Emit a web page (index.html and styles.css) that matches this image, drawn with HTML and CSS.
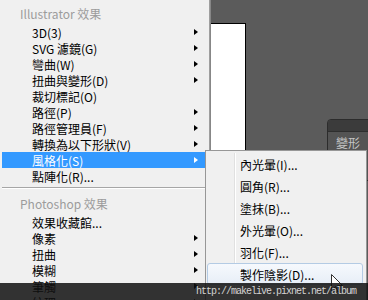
FILE: index.html
```html
<!DOCTYPE html>
<html>
<head>
<meta charset="utf-8">
<link rel="stylesheet" href="styles.css">
</head>
<body>
<div class="screen">
  <div class="menu">
    <div class="head">Illustrator 效果</div>
    <div class="row"><span>3D(3)</span><i class="arr"></i></div>
    <div class="row"><span>SVG 濾鏡(G)</span><i class="arr"></i></div>
    <div class="row"><span>彎曲(W)</span><i class="arr"></i></div>
    <div class="row"><span>扭曲與變形(D)</span><i class="arr"></i></div>
    <div class="row"><span>裁切標記(O)</span></div>
    <div class="row"><span>路徑(P)</span><i class="arr"></i></div>
    <div class="row"><span>路徑管理員(F)</span><i class="arr"></i></div>
    <div class="row"><span>轉換為以下形狀(V)</span><i class="arr"></i></div>
    <div class="row sel"><span>風格化(S)</span><i class="arr"></i></div>
    <div class="row"><span>點陣化(R)...</span></div>
    <div class="sep"></div>
    <div class="head">Photoshop 效果</div>
    <div class="row"><span>效果收藏館...</span></div>
    <div class="row"><span>像素</span><i class="arr"></i></div>
    <div class="row"><span>扭曲</span><i class="arr"></i></div>
    <div class="row"><span>模糊</span><i class="arr"></i></div>
    <div class="row"><span>筆觸</span><i class="arr"></i></div>
    <div class="row"><span>紋理</span><i class="arr"></i></div>
  </div>
  <div class="edge"></div>
  <div class="canvas">
    <div class="artboard"></div>
    <div class="panel">
      <div class="panel-top"></div>
      <div class="panel-tab">變形</div>
    </div>
  </div>
</div>

<div class="submenu">
  <div class="sitem">內光暈(I)...</div>
  <div class="sitem">圓角(R)...</div>
  <div class="sitem">塗抹(B)...</div>
  <div class="sitem">外光暈(O)...</div>
  <div class="sitem">羽化(F)...</div>
  <div class="sitem hover">製作陰影(D)...</div>
</div>

<svg class="cursor" width="12" height="19" viewBox="0 0 12 19">
  <path d="M0.5 0.5 L0.5 16.5 L4.5 12.5 L7 18 L9 17 L6.5 11.5 L11.5 11.5 Z" fill="#fff" stroke="#333" stroke-width="1"/>
</svg>

<div class="watermark">http://makelive.pixnet.net/album</div>
</body>
</html>
```

FILE: styles.css
```css
html, body {
  margin: 0;
  padding: 0;
}
body {
  width: 368px;
  height: 300px;
  overflow: hidden;
  position: relative;
  font-family: "Noto Sans CJK TC", "Noto Sans", sans-serif;
  font-size: 12px;
  color: #000;
  background: #5b5b5b;
}
.screen {
  display: flex;
  height: 300px;
  overflow: hidden;
}
.menu {
  width: 209px;
  flex: none;
  box-sizing: border-box;
  background: #f0f0f0;
  padding: 3px 2px 0 2px;
}
.head {
  height: 21px;
  display: flex;
  align-items: center;
  padding-left: 18px;
  color: #9c9c9c;
}
.menu .head:nth-of-type(n+2) {
  height: 22px;
}
.row {
  height: 16px;
  display: flex;
  align-items: center;
  justify-content: space-between;
  padding: 0 9px 0 30px;
}
.row.sel {
  background: #3399ff;
  color: #fff;
}
.arr {
  width: 0;
  height: 0;
  border-left: 4px solid #000;
  border-top: 3.5px solid transparent;
  border-bottom: 3.5px solid transparent;
}
.sel .arr {
  border-left-color: #fff;
}
.sep {
  height: 8px;
  box-sizing: border-box;
  padding-top: 3px;
}
.sep::before {
  content: "";
  display: block;
  height: 1px;
  background: #a6a6a6;
  border-bottom: 1px solid #fff;
}
.edge {
  width: 2px;
  flex: none;
  background: linear-gradient(to right, #a9a9a9, #7c7c7c);
}
.canvas {
  flex: 1;
  position: relative;
  padding-top: 23px;
}
.artboard {
  width: 34px;
  height: 300px;
  background: #fff;
  border-top: 1px solid #000;
  border-right: 1px solid #000;
}
.panel {
  position: absolute;
  left: 116px;
  top: 119px;
  width: 60px;
  height: 60px;
  border-top-left-radius: 4px;
  border: 1px solid #2c2c2c;
  background: #545454;
  overflow: hidden;
}
.panel-top {
  height: 11px;
  background: #3b3b3b;
  border-bottom: 1px solid #2e2e2e;
}
.panel-tab {
  padding-left: 8px;
  height: 20px;
  display: flex;
  align-items: center;
  color: #c4c4c4;
}
.submenu {
  position: absolute;
  left: 205px;
  top: 150px;
  width: 162px;
  height: 160px;
  box-sizing: border-box;
  border: 1px solid #979797;
  background: #f0f0f0;
  padding: 2px 0 0 0;
}
.submenu::before {
  content: "";
  position: absolute;
  left: 28px;
  top: 2px;
  bottom: 0;
  width: 1px;
  background: #e0e0e0;
  border-right: 1px solid #fff;
}
.sitem {
  position: relative;
  height: 22px;
  display: flex;
  align-items: center;
  margin: 0 3px 0 1px;
  padding-left: 33px;
  box-sizing: border-box;
}
.sitem.hover {
  border: 1px solid #b4cbe4;
  border-radius: 3px;
  background: linear-gradient(#f6f9fd, #e7eef7);
  padding-left: 32px;
}
.cursor {
  position: absolute;
  left: 331px;
  top: 274px;
}
.watermark {
  position: absolute;
  left: 0;
  right: 0;
  bottom: 0;
  height: 17px;
  box-sizing: border-box;
  padding-left: 196px;
  background: rgba(16, 16, 16, 0.85);
  color: #d4d4d4;
  font-family: "Liberation Mono", monospace;
  font-size: 10px;
  letter-spacing: -1px;
  line-height: 17px;
}
```
